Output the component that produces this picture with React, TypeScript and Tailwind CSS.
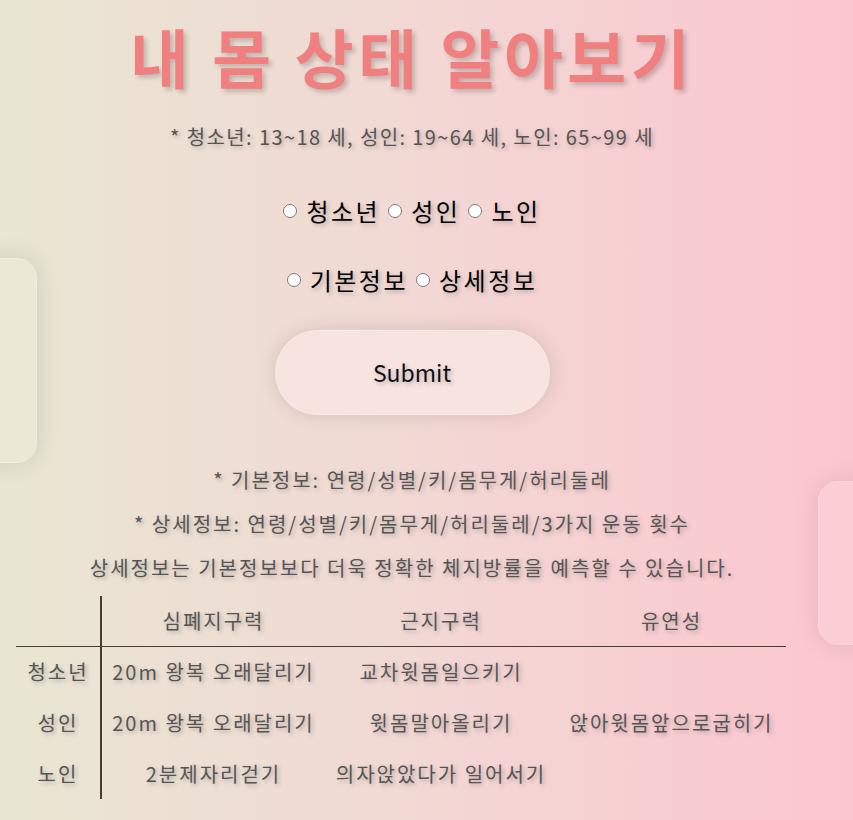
import React from "react";

const rows = [
  { label: "청소년", cells: ["20m 왕복 오래달리기", "교차윗몸일으키기", ""] },
  { label: "성인", cells: ["20m 왕복 오래달리기", "윗몸말아올리기", "앉아윗몸앞으로굽히기"] },
  { label: "노인", cells: ["2분제자리걷기", "의자앉았다가 일어서기", ""] },
];

const shadow = "[text-shadow:2px_2px_4px_rgba(0,0,0,0.25)]";

const Radio = ({ name, label }: { name: string; label: string }) => (
  <label className="flex items-center gap-[9px]">
    <input type="radio" name={name} className="m-0 h-[14px] w-[14px]" />
    <span>{label}</span>
  </label>
);

const App = () => {
  return (
    <div className="relative min-h-screen w-full overflow-hidden bg-[linear-gradient(to_right,#e9e6d3,#f2d8d4_50%,#fcc6d0)] font-['Noto_Sans_CJK_KR',sans-serif]">
      {/* floating cards */}
      <div className="absolute left-[-30px] top-[258px] h-[205px] w-[67px] rounded-[20px] border border-[#f1eedf] bg-[#ebe8d6] shadow-[0_0_25px_rgba(0,0,0,0.12)]" />
      <div className="absolute left-[818px] top-[481px] h-[164px] w-[80px] rounded-[20px] border border-[#fcd6dc] bg-[#fbcdd5] shadow-[0_0_25px_rgba(0,0,0,0.1)]" />

      <div className="relative flex w-[824px] flex-col items-center pt-[15px]">
        <h1 className="text-[64px] font-bold leading-[80px] tracking-[4.5px] text-[#f08080] [text-shadow:3px_3px_5px_rgba(0,0,0,0.2)]">
          내 몸 상태 알아보기
        </h1>

        <p className={`mt-[28px] text-[20px] leading-[28px] tracking-[1.4px] text-[#555] ${shadow}`}>
          * 청소년: 13~18 세, 성인: 19~64 세, 노인: 65~99 세
        </p>

        <div className={`mt-[44px] flex h-[32px] items-center gap-[8px] text-[24px] tracking-[2.5px] text-black ${shadow}`}>
          <Radio name="age" label="청소년" />
          <Radio name="age" label="성인" />
          <Radio name="age" label="노인" />
        </div>

        <div className={`mt-[37px] flex h-[32px] items-center gap-[8px] text-[24px] tracking-[2.5px] text-black ${shadow}`}>
          <Radio name="info" label="기본정보" />
          <Radio name="info" label="상세정보" />
        </div>

        <button
          className={`mt-[34px] h-[85px] w-[275px] rounded-full border border-[#f8ecea] bg-[#f7e4e0] text-[23px] text-[#111] shadow-[0_0_20px_rgba(0,0,0,0.12)] ${shadow}`}
        >
          Submit
        </button>

        <div className={`mt-[43px] flex flex-col items-center text-[20px] leading-[44px] tracking-[2px] text-[#555] ${shadow}`}>
          <p>* 기본정보: 연령/성별/키/몸무게/허리둘레</p>
          <p>* 상세정보: 연령/성별/키/몸무게/허리둘레/3가지 운동 횟수</p>
          <p>상세정보는 기본정보보다 더욱 정확한 체지방률을 예측할 수 있습니다.</p>
        </div>

        <table className={`mt-[6px] ml-[16px] w-[770px] self-start border-collapse text-[20px] tracking-[2px] text-[#555] ${shadow}`}>
          <thead>
            <tr className="h-[50px] border-b border-[#4a3b35]">
              <th className="w-[85px] border-r-2 border-[#4a3b35] font-normal"></th>
              <th className="w-[224px] font-normal">심폐지구력</th>
              <th className="w-[232px] font-normal">근지구력</th>
              <th className="w-[229px] font-normal">유연성</th>
            </tr>
          </thead>
          <tbody>
            {rows.map((row) => (
              <tr key={row.label} className="h-[51px]">
                <td className="border-r-2 border-[#4a3b35] text-center">{row.label}</td>
                {row.cells.map((c, i) => (
                  <td key={i} className="text-center">
                    {c}
                  </td>
                ))}
              </tr>
            ))}
          </tbody>
        </table>
      </div>
    </div>
  );
};

export default App;
